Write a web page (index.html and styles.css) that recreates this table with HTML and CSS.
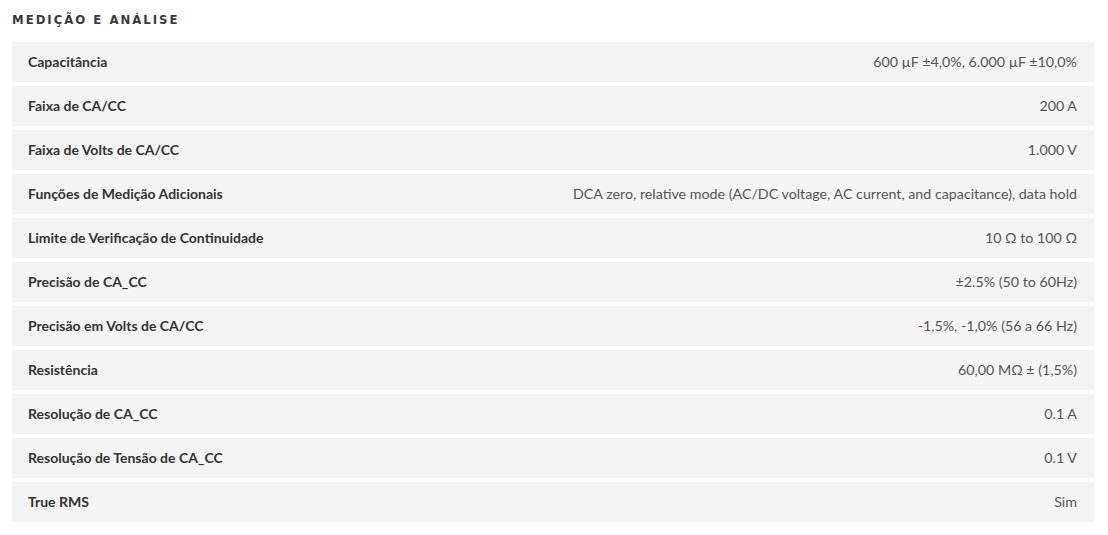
FILE: index.html
```html
<html>
<head>
	<link rel="stylesheet" href="styles.css">
</head>
<body>
	<div class="specs">
		<h3 class="specs-title">Medição e Análise</h3>
		<div class="spec-list">
			<div class="spec-row"><span class="spec-name">Capacitância</span><span class="spec-value">600 µF ±4,0%, 6.000 µF ±10,0%</span></div>
			<div class="spec-row"><span class="spec-name">Faixa de CA/CC</span><span class="spec-value">200 A</span></div>
			<div class="spec-row"><span class="spec-name">Faixa de Volts de CA/CC</span><span class="spec-value">1.000 V</span></div>
			<div class="spec-row"><span class="spec-name">Funções de Medição Adicionais</span><span class="spec-value">DCA zero, relative mode (AC/DC voltage, AC current, and capacitance), data hold</span></div>
			<div class="spec-row"><span class="spec-name">Limite de Verificação de Continuidade</span><span class="spec-value">10 Ω to 100 Ω</span></div>
			<div class="spec-row"><span class="spec-name">Precisão de CA_CC</span><span class="spec-value">±2.5% (50 to 60Hz)</span></div>
			<div class="spec-row"><span class="spec-name">Precisão em Volts de CA/CC</span><span class="spec-value">-1,5%, -1,0% (56 a 66 Hz)</span></div>
			<div class="spec-row"><span class="spec-name">Resistência</span><span class="spec-value">60,00 MΩ ± (1,5%)</span></div>
			<div class="spec-row"><span class="spec-name">Resolução de CA_CC</span><span class="spec-value">0.1 A</span></div>
			<div class="spec-row"><span class="spec-name">Resolução de Tensão de CA_CC</span><span class="spec-value">0.1 V</span></div>
			<div class="spec-row"><span class="spec-name">True RMS</span><span class="spec-value">Sim</span></div>
		</div>
	</div>
</body>
</html>
```

FILE: styles.css
```css
body{
	margin:0;
	background:#fff;
	font-family: Lato, "Open Sans", sans-serif;
}

.specs{
	padding:10px 14px 0 12px;
}

.specs-title{
	margin:0 0 13px 0;
	font-family: "DejaVu Sans Condensed", "Liberation Sans", sans-serif;
	font-size:13px;
	font-weight:bold;
	letter-spacing:2px;
	text-transform:uppercase;
	color:#3a3a3a;
	line-height:19px;
}

.spec-list{
	display:flex;
	flex-direction:column;
	gap:4px;
}

.spec-row{
	display:flex;
	justify-content:space-between;
	align-items:center;
	height:40px;
	padding:0 17px 2px 16px;
	box-sizing:border-box;
	background:#f4f4f4;
	font-size:14px;
}

.spec-name{
	font-weight:bold;
	color:#333;
}

.spec-value{
	font-size:14.25px;
	color:#555;
}
```
